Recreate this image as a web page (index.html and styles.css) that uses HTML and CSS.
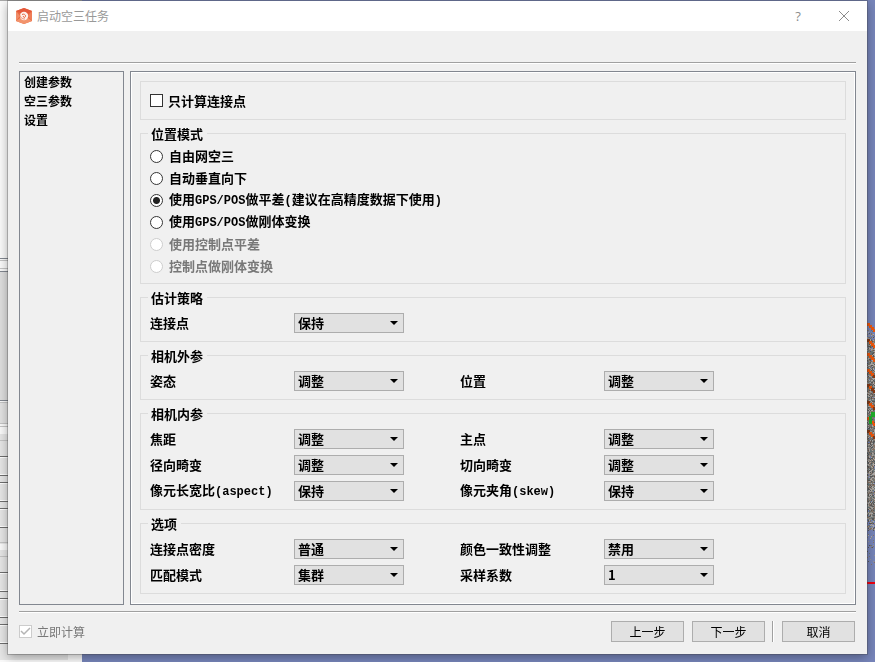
FILE: index.html
```html
<!DOCTYPE html>
<html lang="zh-CN">
<head>
    <meta charset="UTF-8">
    <meta name="viewport" content="width=device-width, initial-scale=1.0">
    <title>启动空三任务</title>
    <link rel="stylesheet" href="styles.css">
</head>
<body>
    <div class="backdrop" aria-hidden="true">
        <svg class="side-panel" width="82" height="662" shape-rendering="crispEdges">
            <rect width="82" height="662" fill="#fafafa"/>
            <rect width="82" height="1" fill="#a8a8a8"/>
            <rect y="272" width="68" height="128" fill="#dedede"/>
            <rect y="403" width="68" height="20" fill="#e2e2e2"/>
            <rect y="434" width="68" height="110" fill="#e6e6e6"/>
            <rect y="550" width="68" height="110" fill="#e6e6e6"/>
            <path d="M0 258.5h68M0 271.5h68M0 400.5h68" stroke="#828790"/>
            <path d="M0 260.5h68M0 268.5h68M0 402.5h68M0 423.5h68M0 426.5h68M0 440.5h68M0 542.5h68M0 556.5h68" stroke="#c4c4c4"/>
            <path d="M0 456.5h68M0 475.5h68M0 482.5h68M0 501.5h68M0 508.5h68M0 527.5h68M0 572.5h68M0 591.5h68M0 598.5h68M0 617.5h68M0 624.5h68M0 643.5h68" stroke="#6e6e6e"/>
            <path d="M0 457.5h68M0 474.5h68M0 483.5h68M0 500.5h68M0 509.5h68M0 526.5h68M0 573.5h68M0 590.5h68M0 599.5h68M0 616.5h68M0 625.5h68M0 642.5h68" stroke="#ffffff"/>
        </svg>
        <canvas class="point-cloud" id="cloud" width="8" height="662"></canvas>
    </div>

    <form class="dialog" onsubmit="return false">
        <header class="titlebar">
            <svg class="logo" width="18" height="18" viewBox="0 0 18 18">
                <path d="M9 1L17 4V14L9 17L1 14V4Z" fill="#ea6a42"/>
                <path d="M9 1L17 4L13 7L5 6L1 4Z" fill="#e4583a"/>
                <path d="M1 4L5 9L1 14Z" fill="#f08c68"/>
                <path d="M17 4L13 9L17 14Z" fill="#ee7d58"/>
                <path d="M1 14L9 17L17 14L13 11H5Z" fill="#f2936c"/>
                <circle cx="9" cy="9" r="4.200" fill="#fdf0ea"/>
                <path d="M7 7.500C8.500 6.500 11 7.500 10.500 9.500C10 11 8 10.500 8.300 9" fill="none" stroke="#e8633f" stroke-width="1"/>
                <path d="M4.500 6C5 11 7 12 10 12" fill="none" stroke="#ea6a42" stroke-width=".7"/>
            </svg>
            <h1 class="title">启动空三任务</h1>
            <button class="title-btn help" type="button" aria-label="帮助">?</button>
            <button class="title-btn" type="button" aria-label="关闭">
                <svg width="12" height="12" viewBox="0 0 12 12"><path d="M1 1L11 11M11 1L1 11" stroke="#8c8c8c"/></svg>
            </button>
        </header>

        <div class="body">
            <hr class="line">
            <div class="main">
                <nav class="steps">
                    <a href="#create">创建参数</a>
                    <a href="#params">空三参数</a>
                    <a href="#settings">设置</a>
                </nav>

                <section class="panel">
                    <div class="only-tie">
                        <label class="check"><input type="checkbox"><span>只计算连接点</span></label>
                    </div>

                    <fieldset class="group modes">
                        <legend>位置模式</legend>
                        <label class="radio"><input type="radio" name="mode"><span>自由网空三</span></label>
                        <label class="radio"><input type="radio" name="mode"><span>自动垂直向下</span></label>
                        <label class="radio"><input type="radio" name="mode" checked><span>使用<span class="latin">GPS/POS</span>做平差<span class="latin">(</span>建议在高精度数据下使用<span class="latin">)</span></span></label>
                        <label class="radio"><input type="radio" name="mode"><span>使用<span class="latin">GPS/POS</span>做刚体变换</span></label>
                        <label class="radio disabled"><input type="radio" name="mode" disabled><span>使用控制点平差</span></label>
                        <label class="radio disabled"><input type="radio" name="mode" disabled><span>控制点做刚体变换</span></label>
                    </fieldset>

                    <fieldset class="group fields">
                        <legend>估计策略</legend>
                        <div class="field"><label for="tie">连接点</label><select id="tie"><option>保持</option><option>调整</option></select></div>
                    </fieldset>

                    <fieldset class="group fields">
                        <legend>相机外参</legend>
                        <div class="field"><label for="pose">姿态</label><select id="pose"><option>调整</option><option>保持</option></select></div>
                        <div class="field"><label for="position">位置</label><select id="position"><option>调整</option><option>保持</option></select></div>
                    </fieldset>

                    <fieldset class="group fields">
                        <legend>相机内参</legend>
                        <div class="field"><label for="focal">焦距</label><select id="focal"><option>调整</option><option>保持</option></select></div>
                        <div class="field"><label for="principal">主点</label><select id="principal"><option>调整</option><option>保持</option></select></div>
                        <div class="field"><label for="radial">径向畸变</label><select id="radial"><option>调整</option><option>保持</option></select></div>
                        <div class="field"><label for="tangential">切向畸变</label><select id="tangential"><option>调整</option><option>保持</option></select></div>
                        <div class="field"><label for="aspect">像元长宽比<span class="latin">(aspect)</span></label><select id="aspect"><option>保持</option><option>调整</option></select></div>
                        <div class="field"><label for="skew">像元夹角<span class="latin">(skew)</span></label><select id="skew"><option>保持</option><option>调整</option></select></div>
                    </fieldset>

                    <fieldset class="group fields">
                        <legend>选项</legend>
                        <div class="field"><label for="density">连接点密度</label><select id="density"><option>普通</option></select></div>
                        <div class="field"><label for="color">颜色一致性调整</label><select id="color"><option>禁用</option></select></div>
                        <div class="field"><label for="match">匹配模式</label><select id="match"><option>集群</option></select></div>
                        <div class="field"><label for="sample">采样系数</label><select id="sample"><option>1</option></select></div>
                    </fieldset>
                </section>
            </div>
            <hr class="line">
            <footer class="footer">
                <label class="check now"><input type="checkbox" checked disabled><span>立即计算</span></label>
                <div class="nav-btns">
                    <button class="btn" type="button">上一步</button>
                    <button class="btn" type="button">下一步</button>
                </div>
                <button class="btn cancel" type="button">取消</button>
            </footer>
        </div>
    </form>

    <script>
        const ctx = document.getElementById("cloud").getContext("2d");
        let seed = 7;

        function rand() {
            seed = (seed * 16807) % 2147483647;
            return seed / 2147483647;
        }

        // grey points, thinning out below the model
        const greys = ["#5c5a5a", "#7f7b78", "#9b9691", "#b3afab", "#6b7a7c", "#8a7667"];
        for (let y = 330; y < 565; y++) {
            for (let x = 0; x < 8; x++) {
                let density = y < 340 ? 0.4 : y < 520 ? 0.97 : y < 530 ? 0.6 : 0.08;
                if (rand() < density) {
                    ctx.fillStyle = greys[Math.floor(rand() * greys.length)];
                    ctx.fillRect(x, y, 1, 1);
                }
            }
        }

        // camera strips
        for (const top of [323, 339, 353, 369, 384, 401, 417, 430]) {
            for (let x = 0; x < 8; x += 2) {
                ctx.fillStyle = rand() < 0.7 ? "#f0580c" : "#8a3a14";
                ctx.fillRect(x, top + x, 3, 3);
            }
        }

        ctx.fillStyle = "#1fae2c";
        ctx.fillRect(4, 412, 4, 5);
        ctx.fillRect(2, 416, 3, 8);
        ctx.fillStyle = "#f00010";
        ctx.fillRect(0, 582, 8, 2);
    </script>
</body>
</html>
```

FILE: styles.css
```css
* { box-sizing: border-box; }
body {
    margin: 0;
    min-height: 100vh;
    padding: 1px 8px 8px;
    background: #7785ba;
    color: #000;
    font: 12px/16px "Noto Sans CJK SC", sans-serif;
    overflow: hidden;
}
.backdrop {
    position: absolute;
    inset: 0;
    z-index: -1;
    overflow: hidden;
}
.side-panel { position: absolute; left: 0; top: 0; }
.point-cloud { position: absolute; right: 0; top: 0; }
.dialog {
    background: #f0f0f0;
    box-shadow: 0 0 0 1px rgba(60, 60, 60, 0.3), 0 3px 10px rgba(0, 0, 0, 0.35);
}
.titlebar {
    display: flex;
    align-items: center;
    height: 30px;
    padding-left: 7px;
    background: #fff;
}
.logo { margin-right: 4px; }
.title {
    flex: 1;
    margin: 0;
    font-size: 12px;
    font-weight: normal;
    line-height: 14px;
    color: #999;
}
.title-btn {
    display: flex;
    align-items: center;
    justify-content: center;
    width: 46px;
    height: 30px;
    padding: 0;
    border: none;
    background: none;
    color: #8c8c8c;
}
.help { font: 13px/14px "Open Sans", sans-serif; }
.body { padding: 31px 11px 12px; }
.line {
    height: 2px;
    margin: 0;
    border: none;
    border-top: 1px solid #a0a0a0;
    background: #fff;
}
.main {
    display: flex;
    gap: 6px;
    padding: 7px 0 6px;
}
.steps {
    display: flex;
    flex-direction: column;
    width: 105px;
    padding: 0 4px;
    border: 1px solid #828790;
}
.steps a {
    color: #000;
    font-weight: bold;
    line-height: 19px;
    text-decoration: none;
}
.panel {
    flex: 1;
    padding: 9px 9px 10px;
    border: 1px solid #828790;
    box-shadow: inset 0 0 0 1px #fff;
    font-size: 13px;
    font-weight: bold;
}
.only-tie {
    display: flex;
    align-items: center;
    height: 39px;
    padding: 0 9px;
    border: 1px solid #dcdcdc;
}
.group {
    margin: 7px 0 0;
    padding: 5px 9px 6px;
    border: 1px solid #dcdcdc;
}
.group legend {
    margin-left: -2px;
    padding: 0 4px 0 3px;
    line-height: 13px;
}
.check, .radio {
    display: flex;
    align-items: center;
    gap: 5px;
}
.radio {
    gap: 6px;
    height: 22px;
}
.disabled { color: #787878; }
.latin { font-family: "Liberation Mono", monospace; font-size: 12px; }
input {
    appearance: none;
    width: 13px;
    height: 13px;
    margin: 0;
    border: 1px solid #333;
    background: #fff;
}
input[type="radio"] { border-radius: 50%; }
input[type="radio"]:checked { background: radial-gradient(circle, #222 3px, #fff 4px); }
input:disabled { border-color: #ccc; }
input[type="checkbox"]:checked {
    background: #fff url("data:image/svg+xml,%3Csvg xmlns='http://www.w3.org/2000/svg' width='11' height='11'%3E%3Cpath d='M1 5L4 8L10 2' fill='none' stroke='%23b4b4b4' stroke-width='1.5'/%3E%3C/svg%3E") center no-repeat;
}
.fields {
    display: grid;
    grid-template-columns: 254px 254px;
    gap: 6px 56px;
    padding: 9px 9px 8px;
}
.field {
    display: grid;
    grid-template-columns: 144px 110px;
    align-items: center;
    height: 20px;
}
select {
    appearance: none;
    height: 20px;
    padding: 0 3px;
    border: 1px solid #adadad;
    border-radius: 0;
    background: #e1e1e1 url("data:image/svg+xml,%3Csvg xmlns='http://www.w3.org/2000/svg' width='8' height='4'%3E%3Cpath d='M0 0H8L4 4Z'/%3E%3C/svg%3E") right 5px center no-repeat;
    color: #000;
    font: bold 13px/16px "Noto Sans CJK SC", sans-serif;
}
.footer {
    display: flex;
    align-items: center;
    padding-top: 8px;
}
.now {
    flex: 1;
    color: #787878;
}
.nav-btns {
    display: flex;
    gap: 8px;
    padding-right: 7px;
    border-right: 1px solid #a0a0a0;
    box-shadow: 1px 0 #fff;
}
.btn {
    width: 73px;
    height: 21px;
    padding: 0;
    border: 1px solid #adadad;
    background: #e1e1e1;
    color: #000;
    font: 12px/16px "Noto Sans CJK SC", sans-serif;
}
.cancel { margin: 0 1px 0 9px; }
```
